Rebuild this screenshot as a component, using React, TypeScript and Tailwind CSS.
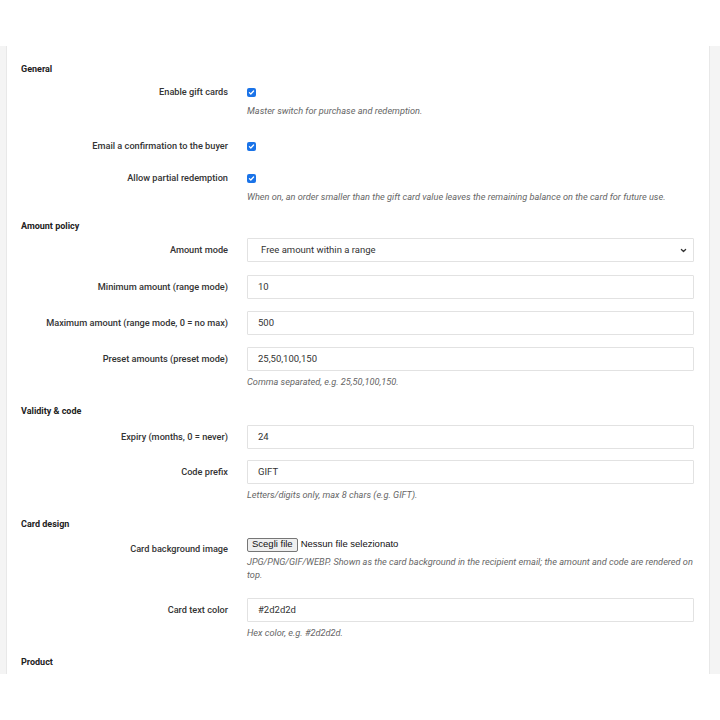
import React from "react";

const font = { fontFamily: "Roboto, 'Noto Sans', sans-serif" };

const Heading = ({ text, className = "" }: { text: string; className?: string }) => (
  <div className={`h-[16px] flex items-center text-[9px] font-bold text-[#222] ${className}`}>{text}</div>
);

const Help = ({ children, className = "" }: { children: React.ReactNode; className?: string }) => (
  <div className={`text-[9.2px] italic leading-[13px] text-[#666] ${className}`}>{children}</div>
);

const Check = () => (
  <span className="inline-flex w-[9px] h-[9px] rounded-[2px] bg-[#1a73e8] items-center justify-center">
    <svg viewBox="0 0 10 10" className="w-[7px] h-[7px]" fill="none" stroke="white" strokeWidth="1.8" strokeLinecap="round" strokeLinejoin="round">
      <path d="M2 5.2l2 2 4-4.4" />
    </svg>
  </span>
);

const CheckRow = ({ label, help, className = "" }: { label: string; help?: string; className?: string }) => (
  <div className={`grid grid-cols-[207px_447px] gap-x-[19px] ${className}`}>
    <div className="h-[16px] flex items-center justify-end text-[9.2px] font-medium text-[#333]">{label}</div>
    <div>
      <div className="h-[16px] flex items-center">
        <Check />
      </div>
      {help && <Help className="mt-[4px]">{help}</Help>}
    </div>
  </div>
);

const InputRow = ({
  label,
  value,
  help,
  className = "",
}: {
  label: string;
  value: string;
  help?: string;
  className?: string;
}) => (
  <div className={`grid grid-cols-[207px_447px] gap-x-[19px] ${className}`}>
    <div className="h-[24px] flex items-center justify-end text-[9.2px] font-medium text-[#333]">{label}</div>
    <div>
      <div className="h-[24px] border border-[#e2e2e2] rounded-[1px] flex items-center pl-[10px] text-[9.5px] text-[#333]">
        {value}
      </div>
      {help && <Help className="mt-[4px]">{help}</Help>}
    </div>
  </div>
);

export default function App() {
  return (
    <div className="w-[720px] h-[720px] bg-white overflow-hidden" style={font}>
      <div className="mt-[46px] bg-[#f4f4f4] pl-[6px] pr-[10px]">
        <div className="bg-white border-l border-r border-[#e8e8e8] pl-[14px] pt-[16px] h-[628px] overflow-hidden">
          <Heading text="General" />
          <CheckRow label="Enable gift cards" help="Master switch for purchase and redemption." className="mt-[6px]" />
          <CheckRow label="Email a confirmation to the buyer" className="mt-[21px]" />
          <CheckRow
            label="Allow partial redemption"
            help="When on, an order smaller than the gift card value leaves the remaining balance on the card for future use."
            className="mt-[16px]"
          />

          <Heading text="Amount policy" className="mt-[16px]" />
          <div className="grid grid-cols-[207px_447px] gap-x-[19px] mt-[3px]">
            <div className="h-[24px] flex items-center justify-end text-[9.2px] font-medium text-[#333]">Amount mode</div>
            <div className="h-[24px] border border-[#e2e2e2] rounded-[1px] flex items-center justify-between pl-[13px] pr-[6px] text-[9.5px] text-[#333]">
              <span>Free amount within a range</span>
              <svg viewBox="0 0 10 10" className="w-[7px] h-[7px]" fill="none" stroke="#333" strokeWidth="1.8" strokeLinecap="round" strokeLinejoin="round">
                <path d="M2 3.5l3 3 3-3" />
              </svg>
            </div>
          </div>
          <InputRow label="Minimum amount (range mode)" value="10" className="mt-[13px]" />
          <InputRow label="Maximum amount (range mode, 0 = no max)" value="500" className="mt-[12px]" />
          <InputRow
            label="Preset amounts (preset mode)"
            value="25,50,100,150"
            help="Comma separated, e.g. 25,50,100,150."
            className="mt-[12px]"
          />

          <Heading text="Validity & code" className="mt-[16px]" />
          <InputRow label="Expiry (months, 0 = never)" value="24" className="mt-[5px]" />
          <InputRow
            label="Code prefix"
            value="GIFT"
            help="Letters/digits only, max 8 chars (e.g. GIFT)."
            className="mt-[11px]"
          />

          <Heading text="Card design" className="mt-[16px]" />
          <div className="grid grid-cols-[207px_447px] gap-x-[19px] mt-[4px]">
            <div className="h-[24px] flex items-center justify-end text-[9.2px] font-medium text-[#333]">
              Card background image
            </div>
            <div>
              <div className="flex items-center h-[15px] text-[9.5px] text-[#111]" style={{ fontFamily: "'Liberation Sans', Arial, sans-serif" }}>
                <span className="h-[14px] px-[4px] flex items-center border border-[#767676] bg-[#efefef] rounded-[2px]">Scegli file</span>
                <span className="ml-[3px]">Nessun file selezionato</span>
              </div>
              <Help className="mt-[3px]">
                JPG/PNG/GIF/WEBP. Shown as the card background in the recipient email; the amount and code are rendered on top.
              </Help>
            </div>
          </div>
          <InputRow label="Card text color" value="#2d2d2d" help="Hex color, e.g. #2d2d2d." className="mt-[17px]" />

          <Heading text="Product" className="mt-[16px]" />
        </div>
      </div>
    </div>
  );
}
